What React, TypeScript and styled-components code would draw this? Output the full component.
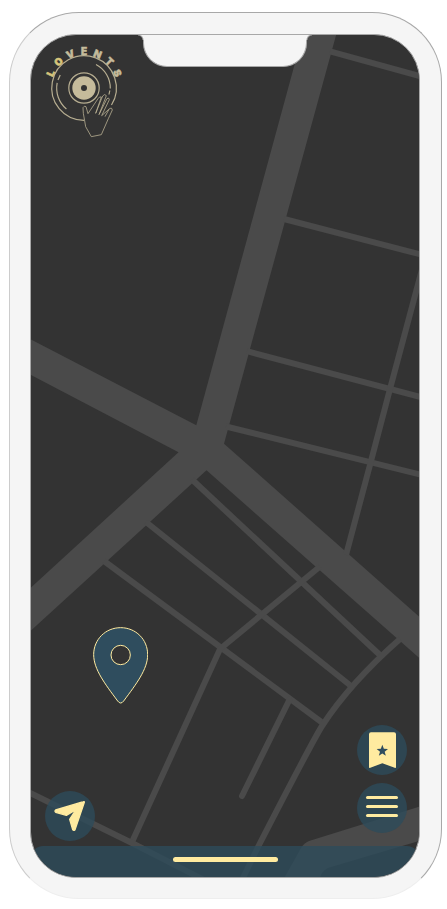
import React from "react";
import styled, { createGlobalStyle } from "styled-components";

const colors = {
  frame: "#f5f5f5",
  outline: "#a8a8a8",
  land: "#333333",
  road: "#4a4a4a",
  panel: "rgba(45, 75, 90, 0.8)",
  pin: "#2f4d5e",
  accent: "#ffeba0",
  brand: "#c5bb9b",
  brandBright: "#d6c57b",
};

const GlobalStyle = createGlobalStyle`
  * { box-sizing: border-box; }
  body { margin: 0; background: #ffffff; font-family: "DejaVu Sans", sans-serif; }
`;

const Page = styled.main`
  display: flex;
  min-height: 100vh;
  padding: 12px 5px 10px 9px;
`;

const Phone = styled.div`
  display: flex;
  flex: 1;
  padding: 21px 21px 20px 20px;
  background: ${colors.frame};
  border: 1px solid ${colors.outline};
  border-left-color: #cccccc;
  border-bottom-color: #eeeeee;
  border-radius: 70px;
`;

const Screen = styled.div`
  position: relative;
  isolation: isolate;
  display: flex;
  flex: 1;
  flex-direction: column;
  overflow: hidden;
  background: ${colors.land};
  border: 1px solid ${colors.outline};
  border-radius: 46px;
`;

const MapCanvas = styled.svg`
  position: absolute;
  inset: 0;
  z-index: -1;
  width: 100%;
  height: 100%;
`;

const Notch = styled.div`
  position: absolute;
  top: -1px;
  left: 50%;
  width: 164px;
  height: 33px;
  transform: translateX(-50%);
  background: ${colors.frame};
  border: 1px solid ${colors.outline};
  border-top: 0;
  border-radius: 0 0 24px 24px;

  &::before,
  &::after {
    content: "";
    position: absolute;
    top: 0;
    width: 6px;
    height: 6px;
  }
  &::before {
    right: 100%;
    background: radial-gradient(circle at 0 100%, transparent 4px, ${colors.outline} 5px, ${colors.frame} 6px);
  }
  &::after {
    left: 100%;
    background: radial-gradient(circle at 100% 100%, transparent 4px, ${colors.outline} 5px, ${colors.frame} 6px);
  }
`;

const Header = styled.header`
  display: flex;
  flex: 1;
  align-items: flex-start;
  padding: 9px 13px;
`;

const LogoArt = styled.svg`
  width: 80px;
  height: 94px;
`;

const LogoLetter = styled.text<{ $bright?: boolean }>`
  font-family: Inter, "DejaVu Sans", sans-serif;
  font-size: 10px;
  font-weight: 900;
  text-anchor: middle;
  fill: ${(p) => (p.$bright ? colors.brandBright : colors.brand)};
  stroke: ${(p) => (p.$bright ? colors.brandBright : colors.brand)};
  stroke-width: 0.5;
`;

const PinButton = styled.button`
  position: absolute;
  top: 70%;
  left: 23%;
  width: 56px;
  height: 80px;
  padding: 0;
  transform: translateX(-50%);
  background: none;
  border: 0;
  cursor: pointer;

  svg {
    display: block;
    width: 100%;
    height: 100%;
  }
`;

const Actions = styled.nav`
  display: flex;
  align-items: flex-end;
  justify-content: space-between;
  padding: 0 12px 5px 14px;
`;

const ActionStack = styled.div`
  display: flex;
  flex-direction: column;
  gap: 8px;
  padding-bottom: 8px;
`;

const RoundButton = styled.button`
  width: 50px;
  height: 50px;
  padding: 0;
  background: ${colors.panel};
  border: 0;
  border-radius: 50%;
  cursor: pointer;

  svg {
    display: block;
    width: 100%;
    height: 100%;
  }
`;

const MenuButton = styled(RoundButton)`
  display: flex;
  flex-direction: column;
  align-items: center;
  justify-content: center;
  gap: 6px;
  padding-bottom: 3px;
`;

const MenuLine = styled.span`
  width: 32px;
  height: 3px;
  background: ${colors.accent};
  border-radius: 2px;
`;

const BottomBar = styled.footer`
  display: flex;
  justify-content: center;
  padding: 11px 0 15px;
  background: ${colors.panel};
  border-radius: 12px 12px 0 0;
`;

const HomeIndicator = styled.div`
  width: 105px;
  height: 5px;
  background: ${colors.accent};
  border-radius: 3px;
`;

const streets = [
  "M330 51.3 L424 77.3",
  "M284 219 L424 255.3",
  "M247 351.2 L424 398",
  "M226 426.5 L424 475.5",
  "M424 262 L390 389 L370.5 463 L346 555",
  "M192 479.5 L380.7 655.7",
  "M146 522 L351 686",
  "M104 561 L322.7 723",
  "M320 566.5 L220 649 L132 842",
  "M400 639 Q350 683 322 726 Q312 742 258 847 L240 884",
  "M27 791.5 L132 843 L208 882",
];

function StreetMap() {
  return (
    <MapCanvas viewBox="31 35 388 842" preserveAspectRatio="xMidYMid slice" aria-hidden="true">
      <path
        fill={colors.road}
        d="M304 30 H337.5 L224 443.7 L421 618.3 V659.5 L206.5 470.3 L29 632.3 V589.3 L178.5 452.3 L29 374 V338.5 L196.3 425.3 Z"
      />
      <path
        fill={colors.road}
        d="M283 880 L301 848 Q304 843 309 841 L421 806 V840.5 L328 868 Q324 870 322 873 L319 880 Z"
      />
      <g fill="none" stroke={colors.road} strokeWidth="6">
        {streets.map((d) => (
          <path key={d} d={d} />
        ))}
        <path d="M289.3 700 L242 796" strokeLinecap="round" />
      </g>
    </MapCanvas>
  );
}

function Logo() {
  return (
    <LogoArt viewBox="44 44 80 94" role="img" aria-label="LOVENTS">
      {"LOVENTS".split("").map((letter, i) => (
        <LogoLetter key={letter} x="84" y="55" $bright={i < 2} transform={`rotate(${(i - 3) * 22} 84 88)`}>
          {letter}
        </LogoLetter>
      ))}
      <circle cx="84" cy="88" r="11.7" fill={colors.brand} />
      <circle cx="84" cy="88" r="3" fill={colors.land} />
      <g fill="none" stroke={colors.brand} strokeWidth="1.2" strokeOpacity="0.9">
        <circle cx="84" cy="88" r="15.2" />
        <path d="M84 120.3 A32.3 32.3 0 1 1 111.5 105" />
        <path d="M57.6 81 A27.3 27.3 0 0 0 65 107.7" transform="rotate(-4 84 88)" />
        <path d="M58 80 L60.2 75" />
        <path d="M96 64.5 A26.5 26.5 0 0 1 110.3 88.5" />
        <path d="M109.8 90.5 L109 94.5" />
      </g>
      <path
        transform="scale(.33333)"
        fill={colors.land}
        stroke={colors.brand}
        strokeWidth="2.6"
        strokeOpacity="0.85"
        strokeLinejoin="round"
        d="M274 410 L257 380 L250 340 L249 323 Q253 316 258 320 L264 341 L294 296 Q299 288 304 291 L287 340 L308 288 Q314 280 319 287 L297 344 L321 296 Q327 291 328 299 L305 347 L330 325 Q336 322 337 330 L325 356 L304 404 Z M315 350 L327 328"
      />
    </LogoArt>
  );
}

export default function App() {
  return (
    <>
      <GlobalStyle />
      <Page>
        <Phone>
          <Screen>
            <StreetMap />
            <Notch />
            <Header>
              <Logo />
            </Header>
            <PinButton type="button" aria-label="Event location">
              <svg viewBox="37 27 168 240" fill={colors.pin} stroke={colors.accent} strokeWidth="3">
                <path
                  fillRule="evenodd"
                  d="M124 40 C169 40 205 75 205 121 C205 165 170 210 133 260 Q124 272 115 260 C78 210 43 165 43 121 C43 75 79 40 124 40 Z M124 93 A29 29 0 1 0 124 151 A29 29 0 1 0 124 93 Z"
                  transform="translate(-1 -2)"
                />
              </svg>
            </PinButton>
            <Actions aria-label="Map actions">
              <RoundButton type="button" aria-label="My location">
                <svg viewBox="135 63 150 150" fill={colors.accent} stroke={colors.accent} strokeWidth="4" strokeLinejoin="round">
                  <path d="M250 95 Q253 94 253 97 L225 179 Q221 183 218 179 L209 148 L228 119 L199 136 L167 127 Q163 124 167 120 Z" />
                </svg>
              </RoundButton>
              <ActionStack>
                <RoundButton type="button" aria-label="Saved events">
                  <svg viewBox="48 30 150 150" fill={colors.accent}>
                    <path d="M90 52 H159 Q165 52 165 58 V156 Q165 160 161 158 L124 145 L88 158 Q84 160 84 156 V58 Q84 52 90 52 Z" />
                    <path
                      fill={colors.pin}
                      d="M124 89 L128.5 101.5 L141 102 L131 110 L134.5 122.5 L124 115.5 L113.5 122.5 L117 110 L107 102 L119.5 101.5 Z"
                    />
                  </svg>
                </RoundButton>
                <MenuButton type="button" aria-label="Menu">
                  <MenuLine />
                  <MenuLine />
                  <MenuLine />
                </MenuButton>
              </ActionStack>
            </Actions>
            <BottomBar>
              <HomeIndicator />
            </BottomBar>
          </Screen>
        </Phone>
      </Page>
    </>
  );
}
